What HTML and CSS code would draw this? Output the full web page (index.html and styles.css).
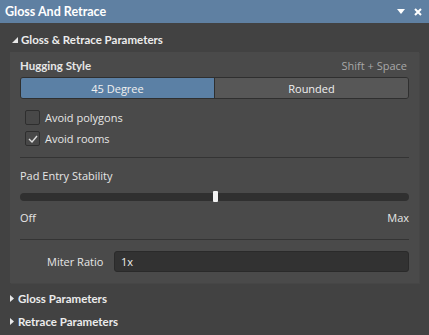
FILE: index.html
```html
<!DOCTYPE html>
<html lang="en">
<head>
  <meta charset="UTF-8">
  <title>Gloss And Retrace</title>
  <link rel="stylesheet" href="styles.css">
</head>
<body>
  <div class="panel">
    <div class="titlebar">
      <span class="title">Gloss And Retrace</span>
      <span class="tools">
        <svg width="8" height="6" viewBox="0 0 8 6"><path d="M0 0H8L4 5Z" fill="#fff"/></svg>
        <svg width="8" height="8" viewBox="0 0 8 8"><path d="M1 1L7 7M7 1L1 7" stroke="#fff" stroke-width="2"/></svg>
      </span>
    </div>

    <div class="section-head open">
      <svg class="caret" width="6" height="6" viewBox="0 0 6 6"><path d="M6 0V6H0Z" fill="#e8e8e8"/></svg>
      Gloss &amp; Retrace Parameters
    </div>

    <div class="group">
      <div class="row-head">
        <span class="bold">Hugging Style</span>
        <span class="hint">Shift + Space</span>
      </div>
      <div class="segmented">
        <div class="seg active">45 Degree</div>
        <div class="seg">Rounded</div>
      </div>

      <label class="check first"><span class="box"></span>Avoid polygons</label>
      <label class="check"><span class="box">
        <svg width="10" height="8" viewBox="0 0 10 8"><path d="M1 4L4 7L9 1" stroke="#ddd" stroke-width="1.4" fill="none"/></svg>
      </span>Avoid rooms</label>

      <div class="sep"></div>

      <div class="label">Pad Entry Stability</div>
      <div class="slider"><span class="thumb"></span></div>
      <div class="range-labels">
        <span>Off</span>
        <span>Max</span>
      </div>

      <div class="sep sep-low"></div>

      <div class="field">
        <span class="field-label">Miter Ratio</span>
        <div class="input">1x</div>
      </div>
    </div>

    <div class="section-head closed first-closed">
      <svg class="caret" width="4" height="7" viewBox="0 0 4 7"><path d="M0 0L4 3.5L0 7Z" fill="#e8e8e8"/></svg>
      Gloss Parameters
    </div>
    <div class="section-head closed">
      <svg class="caret" width="4" height="7" viewBox="0 0 4 7"><path d="M0 0L4 3.5L0 7Z" fill="#e8e8e8"/></svg>
      Retrace Parameters
    </div>
  </div>
</body>
</html>
```

FILE: styles.css
```css
body {
  margin: 0;
  background-color: #424242;
  font-family: "Open Sans", "Noto Sans", sans-serif;
  font-size: 11px;
  color: #e6e6e6;
}
.panel {
  width: 429px;
  height: 335px;
  overflow: hidden;
}
.titlebar {
  height: 23px;
  background-color: #5f80a2;
  display: flex;
  align-items: center;
  justify-content: space-between;
  padding: 0 7px 0 5px;
}
.title {
  font-family: Lato, sans-serif;
  font-weight: bold;
  font-size: 12.5px;
  color: #fff;
}
.tools {
  display: flex;
  align-items: center;
  gap: 9px;
}
.section-head {
  display: flex;
  align-items: center;
  height: 23px;
  padding-left: 10px;
  font-family: Lato, sans-serif;
  font-weight: bold;
  font-size: 11.5px;
  color: #ececec;
}
.section-head.open {
  margin-top: 4px;
  height: 25px;
  padding-left: 12px;
}
.section-head.first-closed {
  margin-top: 4px;
}
.caret {
  margin-right: 4px;
}
.section-head.open .caret {
  margin-right: 3px;
}
.group {
  margin: 0 10px;
  background-color: #4a4a4a;
  padding: 3px 10px 11px 10px;
  box-shadow: 1px 1px 0 #464646;
}
.row-head {
  display: flex;
  justify-content: space-between;
  align-items: center;
  height: 20px;
}
.bold {
  font-family: Lato, sans-serif;
  font-weight: bold;
  font-size: 11.5px;
}
.hint {
  color: #a8a8a8;
  padding-right: 2px;
}
.segmented {
  display: flex;
  margin-top: 2px;
  height: 22px;
  box-sizing: border-box;
  border: 1px solid #2f2f2f;
  border-radius: 3px;
  overflow: hidden;
}
.seg {
  flex: 1;
  display: flex;
  align-items: center;
  justify-content: center;
  background-color: #575757;
  color: #f0f0f0;
}
.seg.active {
  background-color: #5b80a5;
  border-right: 1px solid #2f2f2f;
}
.check {
  display: flex;
  align-items: center;
  height: 21px;
  padding-left: 5px;
  gap: 5px;
}
.check.first {
  margin-top: 8px;
}
.box {
  width: 13px;
  height: 13px;
  border: 1px solid #2e2e2e;
  border-radius: 2px;
  background-color: #484848;
  display: flex;
  align-items: center;
  justify-content: center;
}
.sep {
  height: 1px;
  background-color: #343434;
  margin-top: 8px;
}
.sep.sep-low {
  margin-top: 13px;
}
.label {
  margin-top: 10px;
  height: 16px;
  line-height: 16px;
}
.slider {
  position: relative;
  margin-top: 9px;
  height: 8px;
  background-color: #303030;
  border-radius: 4px;
}
.thumb {
  position: absolute;
  left: 193px;
  top: -2px;
  width: 5px;
  height: 11px;
  background-color: #f2f2f2;
  border-radius: 1px;
}
.range-labels {
  display: flex;
  justify-content: space-between;
  margin-top: 9px;
  height: 16px;
  line-height: 16px;
}
.field {
  display: flex;
  align-items: center;
  margin-top: 11px;
}
.field-label {
  width: 94px;
  padding-left: 27px;
  box-sizing: border-box;
}
.input {
  flex: 1;
  height: 21px;
  box-sizing: border-box;
  line-height: 19px;
  background-color: #323232;
  border: 1px solid #2a2a2a;
  border-radius: 3px;
  padding-left: 6px;
  color: #eee;
}
```
